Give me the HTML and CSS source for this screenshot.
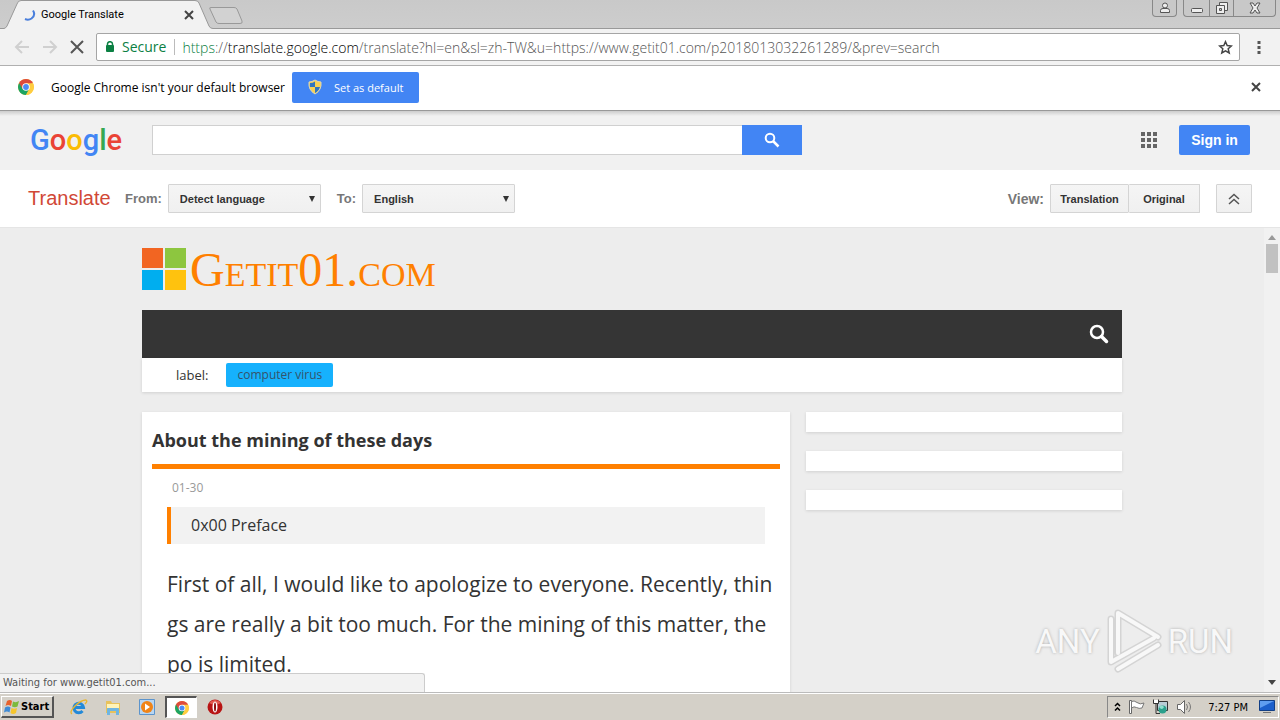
FILE: index.html
```html
<!DOCTYPE html>
<html lang="en">
<head>
    <meta charset="UTF-8">
    <meta name="viewport" content="width=device-width, initial-scale=1.0">
    <title>Google Translate</title>
    <link rel="stylesheet" href="styles.css">
</head>
<body>
    <svg class="defs" width="0" height="0" aria-hidden="true">
        <symbol id="chrome" viewBox="0 0 16 16">
            <circle cx="8" cy="8" r="8" fill="#ffcd40"/>
            <path d="M8 8 1.1 4A8 8 0 0 1 14.9 4z" fill="#de4b3c"/>
            <path d="M1.1 4A8 8 0 0 0 8 16l3.3-6z" fill="#1da462"/>
            <path d="M1.1 4 4.6 10 8 8V4z" fill="#de4b3c"/>
            <path d="M8 4.3h6.9A8 8 0 0 1 8 16l3.3-6z" fill="#ffcd40"/>
            <circle cx="8" cy="8" r="3.8" fill="#fff"/>
            <circle cx="8" cy="8" r="2.9" fill="#4c8bf5"/>
        </symbol>
    </svg>

    <div class="tabstrip">
        <svg class="tab-shape" width="245" height="29" viewBox="0 0 245 29">
            <path d="M0 28.500H4Q6 28 7 26L17 4Q18 .5 21 .5H195Q198 .5 199 3L209 26Q210 28.500 213 28.500V29H0z" fill="#f2f2f2"/>
            <path d="M0 28.500H4Q6 28 7 26L17 4Q18 .5 21 .5H195Q198 .5 199 3L209 26Q210 28.500 213 28.500H245" fill="none" stroke="#999"/>
            <path d="M211 7.500H234Q236 7.500 237 9L242 21Q243 23.500 240 23.500H219Q217 23.500 216 22L210 9Q209 7.500 211 7.500z" fill="#d2d2d2" stroke="#999"/>
        </svg>
        <div class="tab">
            <svg width="12" height="12" viewBox="0 0 12 12"><path d="M9 1.500Q12 6 7.500 9.500Q4.500 11.500 1 10" fill="none" stroke="#4a7fdc" stroke-width="2"/></svg>
            <span class="tab-title">Google Translate</span>
            <button class="plain" aria-label="Close tab"><svg width="10" height="10" viewBox="0 0 10 10"><path d="M1 1l8 8M9 1 1 9" stroke="#444" stroke-width="2"/></svg></button>
        </div>
        <div class="window-buttons">
            <button class="user" aria-label="User"><svg width="12" height="12" viewBox="0 0 12 12"><circle cx="6" cy="3.500" r="2.500" fill="#eee" stroke="#555"/><path d="M1.500 10.500V8.500Q1.500 6.500 4 6.500H8Q10.500 6.500 10.500 8.500V10.500z" fill="#eee" stroke="#555"/></svg></button>
            <div class="window-group">
                <button class="min" aria-label="Minimize"><svg width="14" height="14" viewBox="0 0 14 14"><rect x="1.500" y="7.500" width="11" height="4" rx="1" fill="#eee" stroke="#555"/></svg></button>
                <button class="max" aria-label="Restore"><svg width="14" height="14" viewBox="0 0 14 14"><path d="M4.500 1.500h8v8h-8z" fill="#eee" stroke="#555"/><path d="M1.500 4.500h8v8h-8z" fill="#eee" stroke="#555"/><path d="M4.500 7.500h2v2h-2z" fill="#ccc" stroke="#555"/></svg></button>
                <button class="close" aria-label="Close"><svg width="14" height="14" viewBox="0 0 14 14"><path d="M2 2h3l2 3 2-3h3L9 7l3 5H9L7 9l-2 3H2l3-5z" fill="#eee" stroke="#555"/></svg></button>
            </div>
        </div>
    </div>

    <div class="toolbar">
        <button class="plain" aria-label="Back"><svg width="16" height="14" viewBox="0 0 16 14"><path d="M15 7H2M8 1 2 7l6 6" fill="none" stroke="#d0d0d0" stroke-width="2"/></svg></button>
        <button class="plain" aria-label="Forward"><svg width="16" height="14" viewBox="0 0 16 14"><path d="M1 7h13M8 1l6 6-6 6" fill="none" stroke="#d0d0d0" stroke-width="2"/></svg></button>
        <button class="plain" aria-label="Stop"><svg width="14" height="14" viewBox="0 0 14 14"><path d="M1 1l12 12M13 1 1 13" stroke="#555" stroke-width="2"/></svg></button>
        <div class="address">
            <svg width="10" height="12" viewBox="0 0 10 12"><path d="M2.500 5V3a2.500 2.300 0 0 1 5 0v2" fill="none" stroke="#0b8043" stroke-width="1.500"/><rect x="1" y="4" width="8" height="7" rx="1" fill="#0b8043"/></svg>
            <span class="secure">Secure</span>
            <span class="url"><span class="scheme">https</span>://<span class="host">translate.google.com</span>/translate?hl=en&amp;sl=zh-TW&amp;u=https://www.getit01.com/p2018013032261289/&amp;prev=search</span>
            <button class="plain" aria-label="Bookmark"><svg width="15" height="15" viewBox="0 0 15 15"><path d="M7.500 1.700 9.200 5.600 13.400 6 10.200 8.800 11.200 13 7.500 10.800 3.800 13 4.800 8.800 1.600 6 5.800 5.600z" fill="none" stroke="#444" stroke-width="1.500"/></svg></button>
        </div>
        <button class="plain menu" aria-label="Menu"><svg width="4" height="14" viewBox="0 0 4 14"><path d="M.5 1h3v3h-3zM.5 6h3v3h-3zM.5 11h3v3h-3z" fill="#555"/></svg></button>
    </div>

    <div class="infobar">
        <svg width="16" height="16"><use href="#chrome"/></svg>
        <span class="infobar-text">Google Chrome isn't your default browser</span>
        <button class="default-btn">
            <svg width="14" height="16" viewBox="0 0 14 16"><path d="M7 1Q10 3 13 3Q14 11 7 15Q0 11 1 3Q4 3 7 1z" fill="#f7d154"/><path d="M7 2.500V8H2Q1.500 6 2 4Q5 4 7 2.500z" fill="#2f75c0"/><path d="M7 8H12Q11 12 7 14z" fill="#2f75c0"/><path d="M7 1Q10 3 13 3Q14 11 7 15Q0 11 1 3Q4 3 7 1z" fill="none" stroke="#ddd6b4"/></svg>
            <span>Set as default</span>
        </button>
        <button class="plain infobar-close" aria-label="Dismiss"><svg width="10" height="10" viewBox="0 0 10 10"><path d="M1 1l8 8M9 1 1 9" stroke="#444" stroke-width="2"/></svg></button>
    </div>

    <header class="google-bar">
        <a class="google-logo" href="#" aria-label="Google"><span class="b">G</span><span class="r">o</span><span class="y">o</span><span class="b">g</span><span class="g">l</span><span class="r">e</span></a>
        <form class="search">
            <input type="text" aria-label="Search">
            <button type="button" aria-label="Search"><svg width="16" height="16" viewBox="0 0 16 16"><circle cx="6" cy="6" r="4.300" fill="none" stroke="#fff" stroke-width="2"/><path d="M9 9l5.500 5.500" stroke="#fff" stroke-width="2.500"/></svg></button>
        </form>
        <button class="plain apps" aria-label="Apps"><svg width="16" height="16" viewBox="0 0 16 16"><path d="M0 0h4v4H0zM6 0h4v4H6zM12 0h4v4h-4zM0 6h4v4H0zM6 6h4v4H6zM12 6h4v4h-4zM0 12h4v4H0zM6 12h4v4H6zM12 12h4v4h-4z" fill="#666"/></svg></button>
        <a class="sign-in" href="#">Sign in</a>
    </header>

    <div class="translate-bar">
        <a class="translate-title" href="#">Translate</a>
        <label for="from">From:</label>
        <div class="select-box">
            <select id="from"><option>Detect language</option></select>
            <span class="arrow"></span>
        </div>
        <label class="to" for="to">To:</label>
        <div class="select-box">
            <select id="to"><option>English</option></select>
            <span class="arrow"></span>
        </div>
        <span class="view">View:</span>
        <div class="view-buttons">
            <button>Translation</button>
            <button>Original</button>
        </div>
        <button class="collapse" aria-label="Collapse"><svg width="12" height="12" viewBox="0 0 12 12"><path d="M1 6l5-4.500L11 6M1 11l5-4.500 5 4.500" fill="none" stroke="#555" stroke-width="1.500"/></svg></button>
    </div>

    <div class="viewport">
        <main class="page">
            <div class="wrap">
                <a class="site-logo" href="#">
                    <svg width="44" height="42" viewBox="0 0 44 42"><path d="M0 0h21v20H0z" fill="#f26522"/><path d="M23 0h21v20H23z" fill="#8dc63f"/><path d="M0 22h21v20H0z" fill="#00aeef"/><path d="M23 22h21v20H23z" fill="#ffc20e"/></svg>
                    <span>Getit01.com</span>
                </a>
                <nav class="nav">
                    <button class="plain" aria-label="Search site"><svg width="20" height="20" viewBox="0 0 20 20"><circle cx="8" cy="8" r="6" fill="none" stroke="#fff" stroke-width="2.500"/><path d="M12.500 12.500l5 5" stroke="#fff" stroke-width="3.500" stroke-linecap="round"/></svg></button>
                </nav>
                <div class="tags">
                    <span>label:</span>
                    <a class="tag" href="#">computer virus</a>
                </div>
                <div class="columns">
                    <article class="post">
                        <h1>About the mining of these days</h1>
                        <div class="date">01-30</div>
                        <h2>0x00 Preface</h2>
                        <p>First of all, I would like to apologize to everyone. Recently, thin<br>gs are really a bit too much. For the mining of this matter, the<br>po is limited.</p>
                    </article>
                    <aside class="side">
                        <div class="box"></div>
                        <div class="box"></div>
                        <div class="box"></div>
                    </aside>
                </div>
            </div>
        </main>
        <div class="scrollbar">
            <span class="up"></span>
            <span class="thumb"></span>
            <span class="down"></span>
        </div>
        <div class="status">Waiting for www.getit01.com...</div>
        <div class="watermark">
            <span>ANY</span>
            <svg width="58" height="64" viewBox="0 0 58 64"><g fill="none" stroke-linejoin="round" stroke-linecap="round"><path d="M13 44V4L53 28M6 10V53L49 29M13 60L53 36" stroke="#d4d4d4" stroke-width="7"/><path d="M13 44V4L53 28M6 10V53L49 29M13 60L53 36" stroke="#f8f8f8" stroke-width="4"/></g></svg>
            <span>RUN</span>
        </div>
    </div>

    <footer class="taskbar">
        <button class="start">
            <svg width="16" height="16" viewBox="0 0 16 16"><path d="M3 2Q6 0 8 2L7 7Q4 5 1.500 7z" fill="#e8622c"/><path d="M9 2.500Q12 4 15 2L13.500 7.500Q11 9 8 7.500z" fill="#7cba3c"/><path d="M1 8.500Q4 6.500 6.500 8.500L5.500 13.500Q3 11.500 0 13.500z" fill="#3f8bd6"/><path d="M7.500 9Q10 10.500 13 9L12 14Q9 16 6.500 14z" fill="#f6c52c"/></svg>
            <span>Start</span>
        </button>
        <div class="quick">
            <button class="plain" aria-label="Internet Explorer"><svg width="18" height="18" viewBox="0 0 18 18"><path d="M5 9.500H13.500A4.800 4.800 0 1 0 12.500 13" fill="none" stroke="#2389d8" stroke-width="3"/><path d="M2 16Q-1 14 5 8T16 2Q18 3 15 6" fill="none" stroke="#eab52c" stroke-width="1.300"/></svg></button>
            <button class="plain" aria-label="Explorer"><svg width="18" height="18" viewBox="0 0 18 18"><path d="M2 3h5l1 2h8v10H2z" fill="#e8c25c"/><path d="M3 6h12v4H3z" fill="#fff3b8"/><path d="M3 17v-6q0-1 1-1h10q1 0 1 1v6h-3v-4H6v4z" fill="#6fb5e2"/></svg></button>
            <button class="plain" aria-label="Media Player"><svg width="18" height="18" viewBox="0 0 18 18"><path d="M1.500 1.500h15v15h-15z" fill="#b8d6f2" stroke="#5c94cc"/><circle cx="9" cy="9" r="6" fill="#f08418"/><path d="M7 5.500v7l5-3.500z" fill="#fff"/></svg></button>
            <button class="plain active" aria-label="Chrome"><svg width="14" height="14"><use href="#chrome"/></svg></button>
            <button class="plain" aria-label="Opera"><svg width="18" height="18" viewBox="0 0 18 18"><circle cx="9" cy="9" r="7.500" fill="#b81414"/><path d="M3 5Q9-1 15 5Q9 8 3 5z" fill="#e25a50"/><ellipse cx="9" cy="9" rx="2.500" ry="5.500" fill="#fff"/><ellipse cx="9" cy="9" rx="1" ry="4.500" fill="#8a0c0c"/></svg></button>
        </div>
        <div class="tray">
            <svg width="7" height="10" viewBox="0 0 7 10"><path d="M1 4l2.500-2.500L6 4M1 8.500 3.500 6 6 8.500" fill="none" stroke="#000" stroke-width="1.500"/></svg>
            <svg width="17" height="16" viewBox="0 0 17 16"><path d="M1.500 1.500h2v13h-2z" fill="#fff" stroke="#666"/><path d="M3.500 2.500Q6 1 9 3.500T16 4L14 9Q11 10 8.500 8.500T3.500 9z" fill="#fff" stroke="#777"/></svg>
            <svg width="17" height="16" viewBox="0 0 17 16"><path d="M5.500 2.500h10v9h-10z" fill="#b9cdd6" stroke="#333"/><path d="M1.500.5v4h5v-4M4 4.500v10h4" fill="none" stroke="#333"/><path d="M2 1h4v3H2z" fill="#fff"/><circle cx="10.500" cy="10.500" r="4" fill="#2ba08c"/><path d="M7 8q3-3 5 0-2 4-5 0z" fill="#8fe0d0"/></svg>
            <svg width="17" height="16" viewBox="0 0 17 16"><path d="M1.500 5.500h3l4-4v13l-4-4h-3z" fill="#fff" stroke="#666"/><path d="M10.500 5q2 3 0 6M12.500 3q4 5 0 10" fill="none" stroke="#777"/></svg>
            <span class="clock">7:27 PM</span>
            <svg width="16" height="14" viewBox="0 0 16 14"><path d="M.5.500h15v10H.5z" fill="#1c5fcb" stroke="#123f86"/><path d="M1 1h14L1 8z" fill="#5f9df0"/><path d="M4 12h8v1H4z" fill="#777"/></svg>
        </div>
    </footer>
</body>
</html>
```

FILE: styles.css
```css
* {
    box-sizing: border-box;
}
body {
    margin: 0;
    height: 100vh;
    display: flex;
    flex-direction: column;
    overflow: hidden;
    font-family: "DejaVu Sans Condensed", Tahoma, sans-serif;
    font-size: 11px;
    color: #000;
    background-color: #ededed;
}
a {
    text-decoration: none;
}
svg {
    display: block;
    flex: none;
}
button {
    font-family: inherit;
    cursor: pointer;
}
.defs {
    position: absolute;
}
.plain {
    display: flex;
    align-items: center;
    justify-content: center;
    padding: 0;
    border: 0;
    background: none;
}

/* Browser window */
.tabstrip {
    display: grid;
    grid-template-columns: 245px 1fr;
    height: 29px;
    flex: none;
    background: linear-gradient(#c9c9c9, #cdcdcd);
    border-bottom: 1px solid #999;
}
.tab-shape, .tab {
    grid-area: 1 / 1;
}
.tab {
    display: flex;
    align-items: center;
    height: 28px;
    padding: 1px 51px 0 24px;
}
.tab-title {
    flex: 1;
    padding-left: 5px;
    font-family: Roboto, sans-serif;
    font-size: 11px;
}
.window-buttons {
    display: flex;
    justify-content: flex-end;
    gap: 6px;
    height: 17px;
    padding-right: 4px;
}
.window-buttons button {
    display: flex;
    align-items: center;
    justify-content: center;
    padding: 0;
    border: 1px solid #888;
    border-top: 0;
    background-color: #c8c8c8;
}
.window-group {
    display: flex;
}
.window-buttons .user {
    width: 25px;
    border-radius: 0 0 4px 4px;
}
.window-buttons .min {
    width: 26px;
    border-right: 0;
    border-radius: 0 0 0 4px;
}
.window-buttons .max {
    width: 25px;
}
.window-buttons .close {
    width: 42px;
    border-left: 0;
    border-radius: 0 0 4px 0;
}
.toolbar {
    display: flex;
    align-items: center;
    gap: 12px;
    height: 37px;
    flex: none;
    padding: 0 19px 0 14px;
    background-color: #f2f2f2;
    border-bottom: 1px solid #b0b0b0;
}
.address {
    flex: 1;
    min-width: 0;
    height: 28px;
    display: flex;
    align-items: center;
    padding: 0 6px 0 8px;
    border: 1px solid #a5a5a5;
    border-radius: 2px;
    background-color: #fff;
    font-family: "Open Sans", sans-serif;
    font-size: 14px;
    font-weight: 300;
    white-space: nowrap;
}
.secure {
    padding: 0 8px 0 7px;
    border-right: 1px solid #bbb;
    line-height: 16px;
    font-weight: 400;
    color: #0b8043;
}
.url {
    flex: 1;
    padding-left: 7px;
    overflow: hidden;
    color: #555;
}
.scheme {
    color: #0b8043;
}
.host {
    color: #000;
}
.menu {
    padding-left: 5px;
}
.infobar {
    display: flex;
    align-items: center;
    height: 45px;
    flex: none;
    padding: 0 19px 2px 18px;
    background-color: #fff;
    border-bottom: 1px solid #999;
}
.infobar-text {
    padding: 0 7px 0 17px;
    font-family: "Open Sans", sans-serif;
    font-size: 12px;
}
.default-btn {
    display: flex;
    align-items: center;
    gap: 12px;
    height: 31px;
    padding: 0 16px;
    border: 0;
    border-radius: 2px;
    background-color: #4285f4;
    color: #fff;
    font-family: "Open Sans", sans-serif;
    font-size: 11px;
}
.infobar-close {
    margin-left: auto;
}

/* Translate header */
.google-bar {
    display: flex;
    align-items: center;
    height: 59px;
    flex: none;
    padding: 0 30px 2px;
    background: linear-gradient(#ccc, #f1f1f1 5px);
    font-family: "Liberation Sans", Arial, sans-serif;
}
.google-logo {
    width: 122px;
    font-family: Roboto, sans-serif;
    font-size: 29px;
    font-weight: 500;
    line-height: 36px;
}
.b { color: #4285f4; }
.r { color: #ea4335; }
.y { color: #fbbc05; }
.g { color: #34a853; }
.search {
    display: flex;
    width: 650px;
    height: 30px;
}
.search input {
    flex: 1;
    min-width: 0;
    border: 1px solid #d0d0d0;
    border-right: 0;
    background-color: #fff;
}
.search button {
    display: flex;
    align-items: center;
    justify-content: center;
    width: 60px;
    padding: 0;
    border: 0;
    background-color: #4285f4;
}
.apps {
    margin: 0 22px 0 auto;
}
.sign-in {
    width: 71px;
    border-radius: 2px;
    background-color: #4285f4;
    color: #fff;
    font-size: 14px;
    font-weight: bold;
    line-height: 30px;
    text-align: center;
}
.translate-bar {
    display: flex;
    align-items: center;
    height: 58px;
    flex: none;
    padding: 0 28px;
    background-color: #fff;
    border-bottom: 1px solid #e5e5e5;
    font-family: "Liberation Sans", Arial, sans-serif;
}
.translate-title {
    width: 97px;
    font-size: 20px;
    color: #d14836;
}
.translate-bar label, .view {
    padding-right: 6px;
    font-size: 13px;
    font-weight: bold;
    color: #777;
}
.translate-bar .view {
    font-size: 14px;
}
.translate-bar .to {
    padding-left: 16px;
}
.select-box {
    display: grid;
    align-items: center;
    width: 153px;
}
.select-box select, .arrow {
    grid-area: 1 / 1;
}
.select-box select {
    appearance: none;
    height: 29px;
    padding: 0 11px;
}
.select-box select, .view-buttons button, .collapse {
    border: 1px solid #d4d4d4;
    border-radius: 1px;
    background: linear-gradient(#f5f5f5, #f0f0f0);
    color: #333;
    font-family: "Liberation Sans", Arial, sans-serif;
    font-size: 11px;
    font-weight: bold;
}
.arrow {
    justify-self: end;
    margin-right: 6px;
    border: 3px solid transparent;
    border-top: 6px solid #333;
    border-bottom: 0;
    pointer-events: none;
}
.view {
    margin-left: auto;
}
.view-buttons {
    display: flex;
}
.view-buttons button {
    height: 29px;
    padding: 0;
    width: 79px;
}
.view-buttons button + button {
    width: 71px;
    border-left: 0;
}
.collapse {
    display: flex;
    align-items: center;
    justify-content: center;
    width: 36px;
    height: 29px;
    margin-left: 16px;
    padding: 0;
}

/* Translated page */
.viewport {
    position: relative;
    display: flex;
    flex: 1;
    min-height: 0;
    overflow: hidden;
}
.page {
    flex: 1;
    min-width: 0;
    overflow: hidden;
    font-family: "Open Sans", "Noto Sans", sans-serif;
    color: #333;
}
.wrap {
    max-width: 980px;
    margin: 0 auto;
}
.site-logo {
    display: flex;
    align-items: center;
    gap: 4px;
    height: 82px;
    font-family: "Liberation Serif", serif;
    font-size: 48px;
    font-variant: small-caps;
    color: #ff8000;
}
.nav {
    display: flex;
    align-items: center;
    justify-content: flex-end;
    height: 48px;
    padding-right: 13px;
    background-color: #353535;
}
.tags {
    display: flex;
    align-items: center;
    gap: 18px;
    height: 34px;
    padding-left: 34px;
    font-size: 13px;
}
.tag {
    padding: 0 11px;
    border-radius: 2px;
    background-color: #16b1fd;
    color: #35536b;
    font-size: 12px;
    line-height: 24px;
}
.tags, .post, .box {
    background-color: #fff;
    box-shadow: 0 1px 3px rgba(0,0,0,0.12);
}
.columns {
    display: flex;
    align-items: flex-start;
    gap: 16px;
    padding-top: 20px;
}
.post {
    flex: 1;
    min-width: 0;
    padding: 10px;
}
.post h1 {
    margin: 0;
    border-bottom: 5px solid #ff8000;
    font-size: 18px;
    line-height: 37px;
    padding-bottom: 5px;
}
.date {
    padding: 9px 20px;
    font-size: 12px;
    line-height: 20px;
    color: #999;
}
.post h2 {
    margin: 0 15px;
    padding-left: 20px;
    border-left: 4px solid #ff8000;
    background-color: #f2f2f2;
    font-size: 16px;
    font-weight: normal;
    line-height: 37px;
}
.post p {
    margin: 20px 15px;
    font-size: 21px;
    line-height: 40px;
    white-space: nowrap;
}
.side {
    display: flex;
    flex-direction: column;
    gap: 19px;
    width: 316px;
}
.box {
    height: 20px;
}
.scrollbar {
    display: flex;
    flex-direction: column;
    align-items: center;
    width: 16px;
    padding: 7px 0;
    background-color: #f1f1f1;
}
.up, .down {
    border: 4px solid transparent;
}
.up {
    border-top: 0;
    border-bottom: 5px solid #999;
}
.thumb {
    width: 12px;
    height: 29px;
    margin-top: 4px;
    background-color: #c1c1c1;
}
.down {
    margin-top: auto;
    border-bottom: 0;
    border-top: 5px solid #444;
}
.status {
    position: absolute;
    left: 0;
    bottom: 0;
    width: 425px;
    padding-left: 3px;
    border: 1px solid #ccc;
    border-width: 1px 1px 0 0;
    border-radius: 0 3px 0 0;
    background-color: #f2f2f2;
    line-height: 18px;
    color: #555;
}
.watermark {
    position: absolute;
    right: 47px;
    bottom: 19px;
    display: flex;
    align-items: center;
    gap: 5px;
    font-family: Roboto, sans-serif;
    font-size: 33px;
    color: #f8f8f8;
    text-shadow: 0 0 3px #aaa;
}

/* Taskbar */
.taskbar {
    display: flex;
    align-items: center;
    height: 28px;
    flex: none;
    padding: 1px 1px 0;
    background-color: #d4d0c8;
    border-top: 1px solid #bbb;
    box-shadow: inset 0 1px 0 #fff;
}
.start {
    display: flex;
    align-items: center;
    gap: 1px;
    height: 22px;
    padding: 0 3px 0 2px;
    border: 1px solid #fff;
    border-right: 2px solid #555;
    border-bottom: 2px solid #555;
    background-color: #d4d0c8;
    font-size: 11px;
    font-weight: bold;
}
.quick {
    display: flex;
    align-items: center;
    gap: 2px;
    padding-left: 9px;
}
.quick .plain {
    width: 32px;
    height: 22px;
}
.quick .active {
    border: 1px solid #fff;
    border-top: 2px solid #555;
    border-left: 2px solid #555;
    background-color: #fff;
}
.tray {
    display: flex;
    align-items: center;
    gap: 7px;
    height: 22px;
    margin-left: auto;
    padding: 0 3px 0 6px;
    border: 1px solid #888;
    border-right-color: #fff;
    border-bottom-color: #fff;
}
.clock {
    padding: 0 4px 0 8px;
}
```
